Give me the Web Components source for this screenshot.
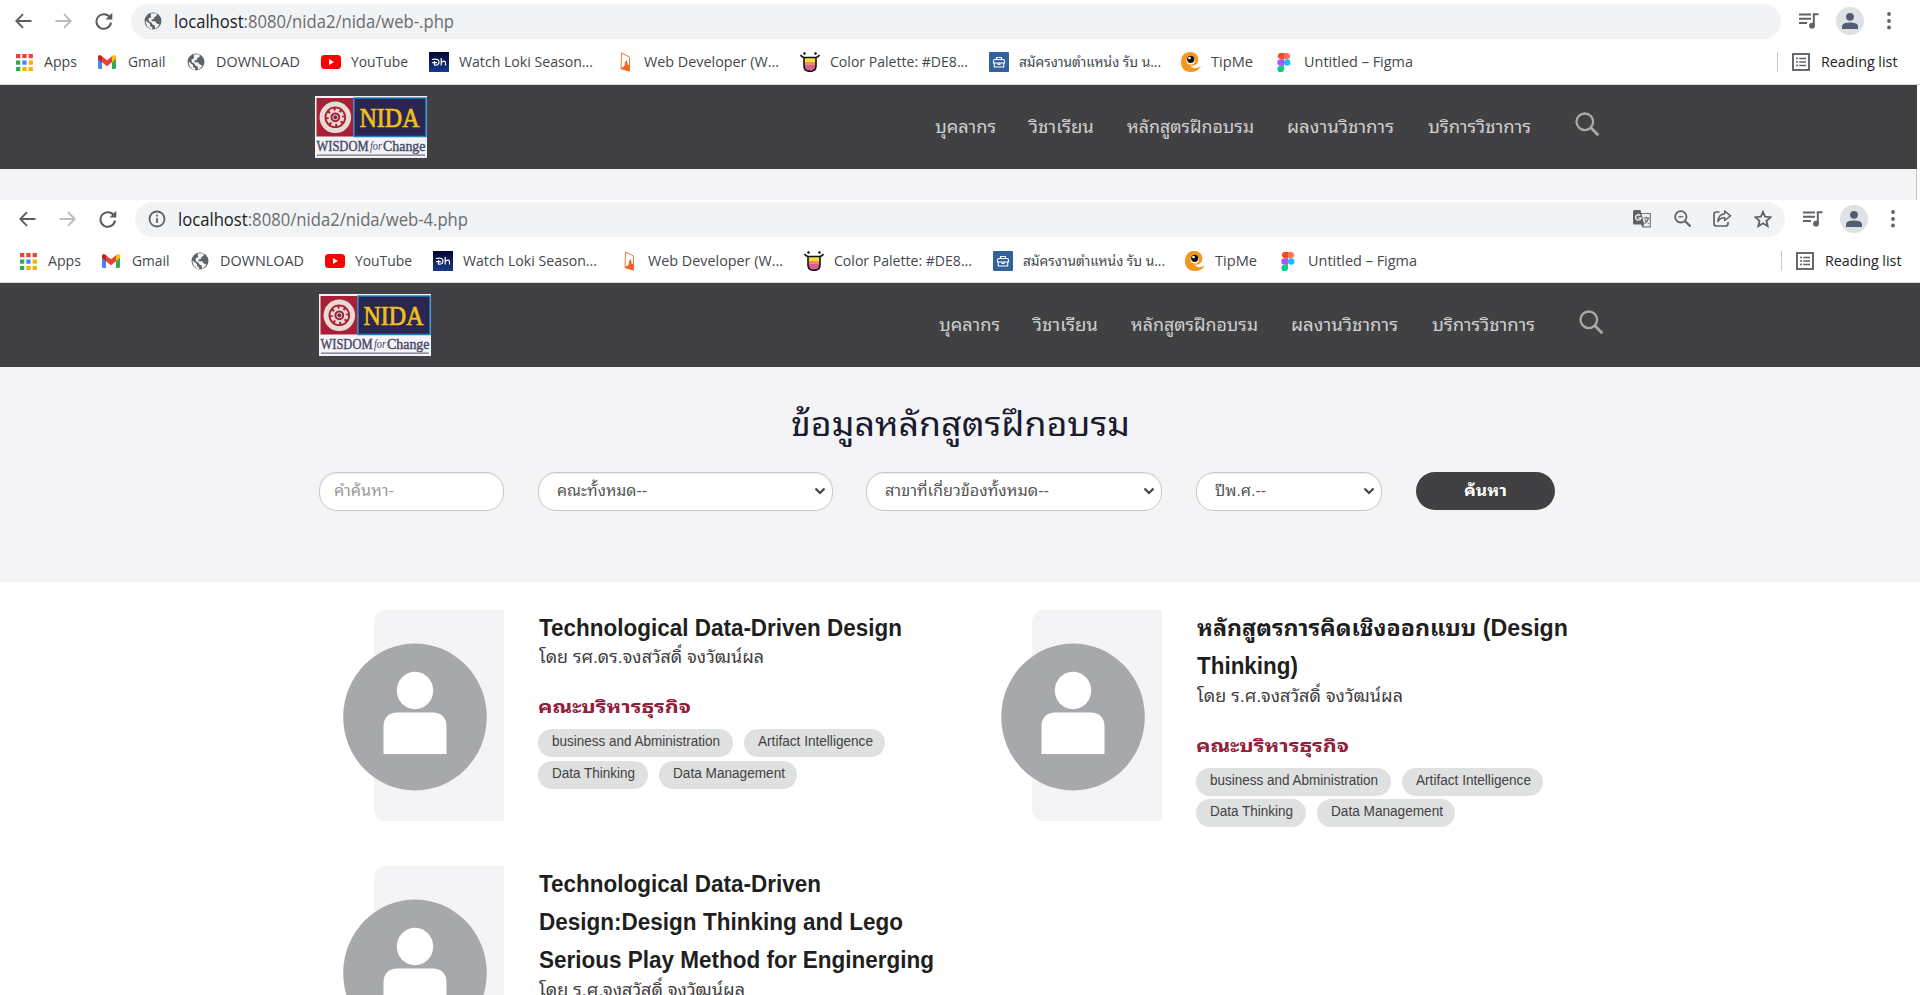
<!DOCTYPE html>
<html lang="th">
<head>
<meta charset="utf-8">
<title>NIDA</title>
<style>
html,body{margin:0;padding:0;background:#fff;overflow:hidden}
body{width:1920px;height:995px;font-family:"Liberation Sans","Noto Sans Thai Looped","Loma","Waree","Garuda","Noto Sans Thai","Noto Sans",sans-serif}
</style>
</head>
<body>
<nida-app></nida-app>
<script>
const define = (name, html, setup) => customElements.define(name, class extends HTMLElement {
  connectedCallback() {
    if (this.shadowRoot) return;
    const root = this.attachShadow({ mode: 'open' });
    root.innerHTML = typeof html === 'function' ? html(this) : html;
    if (setup) setup(this, root);
  }
});

const globe = '<svg viewBox="0 0 18 18" width="18" height="18"><circle cx="9" cy="9" r="8.5" fill="#5f6368"/><path d="M1.5 8.6 6 12v2l2.2 1.2v2A8.4 8.4 0 0 1 1.500 8.600ZM6.500 1.500 12.500 1.300 12.800 3.500 10.300 5.200 9.800 7 7.500 7.600 7.600 9.200 11 9.300 12.800 11.500 15.500 12.600A8 8 0 0 1 11 16.700L10.800 13.800 8.500 12.500 7.300 10.500 4.800 9.300 4.500 6.500 7.200 5.300Z" fill="#fff" opacity=".92"/></svg>';

const icons = {
  apps: '<svg width="17" height="17" viewBox="0 0 17 17">' +
    [['#ea4335','#ea4335','#ea4335'],['#34a853','#4285f4','#f2b200'],['#34a853','#f2b200','#f2b200']].map((r,y)=>r.map((c,x)=>`<rect x="${x*6.3}" y="${y*6.5}" width="4.300" height="4.200" fill="${c}"/>`).join('')).join('') + '</svg>',
  gmail: '<svg width="18" height="14" viewBox="0 0 18 14"><path d="M0 1.500V12.500Q0 14 1.500 14H4V4Z" fill="#4285f4"/><path d="M18 1.500V12.500Q18 14 16.500 14H14V4Z" fill="#34a853"/><path d="M14 1 16 0Q18 0 18 2V4L14 7.200Z" fill="#fbbc04"/><path d="M4 1.200 2 0Q0 0 0 2V4L4 7.200Z" fill="#c5221f"/><path d="M4 1.200 9 5.200 14 1.200V7.200L9 11.200 4 7.200Z" fill="#ea4335"/></svg>',
  globe,
  youtube: '<svg width="20" height="14" viewBox="0 0 20 14"><rect width="20" height="14" rx="3.500" fill="#f00"/><path d="M8 4 13 7 8 10Z" fill="#fff"/></svg>',
  loki: '<svg width="20" height="20" viewBox="0 0 20 20"><defs><linearGradient id="b" x2="0" y2="1"><stop stop-color="#03062c"/><stop offset="1" stop-color="#16398c"/></linearGradient></defs><rect width="20" height="20" fill="url(#b)"/><path d="M3 7.500Q10.500 6 10 10.500 9.500 13.500 5.500 13.200V9M3 10.800Q6 9.800 8 10.800M12.200 6V13.500M12.200 10.500Q16.500 7.500 16.500 11V13.500" fill="none" stroke="#fff" stroke-width="1.200"/></svg>',
  webdev: '<svg width="11" height="20" viewBox="0 0 11 20"><path d="M1.500 1 9.500 5V19L1 16.500Z" fill="none" stroke="#f0783c" stroke-width="1"/><path d="M1 16 4.500 14 5 10 7 8 7.500 12.500 9.500 13V19.500L1 17Z" fill="#f26522"/></svg>',
  palette: '<svg width="20" height="20" viewBox="0 0 20 20"><path d="M4 5.500H16V14Q16 19.300 10 19.300T4 14Z" fill="#f6df3c"/><path d="M4.500 10H15.500V14H4.500Z" fill="#ef8f5c"/><path d="M4.500 13H15.500Q16 19 10 19T4.500 13Z" fill="#d85c9c"/><path d="M.5 3Q2 5 4 5.500H16Q18 5 19.500 3M4 5.500V14Q4 19.300 10 19.300T16 14V5.500" fill="none" stroke="#111" stroke-width="1.600"/><circle cx="4.500" cy="1.500" r="1.200"/><circle cx="15.500" cy="1.500" r="1.200"/></svg>',
  job: '<svg width="20" height="20" viewBox="0 0 20 20"><rect width="20" height="20" rx="1" fill="#31629c"/><g fill="none" stroke="#fff" stroke-width="1.100"><path d="M7.500 7.500V5.500H12.500V7.500M4.500 11V9Q4.500 7.500 6 7.500H14Q15.500 7.500 15.500 9V11ZM5.300 11V15H14.700V11M9 11V12.500H11V11"/></g></svg>',
  tipme: '<svg width="20" height="20" viewBox="0 0 20 20"><path d="M9 0C14 0 17.300 3 17.300 7.500 17.300 12 14 14 9.500 13.800 11.500 17 16 17 20 14 18 18.500 14 20 9.500 20 3.500 20 0 16 0 10 0 4 3.500 0 9 0Z" fill="#f5961e"/><ellipse cx="9.700" cy="8.500" rx="4.200" ry="4" fill="#fff"/><ellipse cx="9.700" cy="7.300" rx="3.600" ry="3.600" fill="#111"/><circle cx="8.500" cy="6" r="1.300" fill="#fff"/></svg>',
  figma: '<svg width="14" height="19" viewBox="0 0 14 19"><path d="M7 0H3.500A3.200 3.200 0 0 0 3.500 6.300H7Z" fill="#f24e1e"/><path d="M7 0H10.500A3.200 3.200 0 0 1 10.500 6.300H7Z" fill="#ff7262"/><path d="M7 6.300H3.500A3.200 3.200 0 0 0 3.500 12.700H7Z" fill="#a259ff"/><circle cx="10.200" cy="9.500" r="3.200" fill="#1abcfe"/><path d="M3.500 12.700H7V15.800A3.300 3.300 0 1 1 3.500 12.700Z" fill="#0acf83"/></svg>',
  back: '<svg width="17" height="16" viewBox="0 0 17 16"><path d="M16.500 8H1.500M8 1.200 1.300 8 8 14.800" fill="none" stroke="#5a5d61" stroke-width="1.900"/></svg>',
  forward: '<svg width="17" height="16" viewBox="0 0 17 16"><path d="M.5 8H15.500M9 1.200 15.700 8 9 14.800" fill="none" stroke="#babcbe" stroke-width="1.900"/></svg>',
  reload: '<svg width="18" height="18" viewBox="0 0 18 18"><path d="M15.200 6A7.300 7.300 0 1 0 16 10.500" fill="none" stroke="#5a5d61" stroke-width="2"/><path d="M17.300.8V7.500H10.500Z" fill="#5a5d61"/></svg>',
  info: '<svg width="18" height="18" viewBox="0 0 18 18"><circle cx="9" cy="9" r="7.500" fill="none" stroke="#5f6368" stroke-width="1.800"/><path d="M8.100 8H9.900V13H8.100ZM8.100 4.800H9.900V6.500H8.100Z" fill="#5f6368"/></svg>',
  translate: '<svg width="19" height="18" viewBox="0 0 19 18"><path d="M7 3.500H17.300V16.800H9.500" fill="#f1f3f4" stroke="#777a7e" stroke-width="1.200"/><path d="M1.500 0H7.500L11.300 14.500H1.500Q0 14.500 0 13V1.500Q0 0 1.500 0ZM8 14.500 9.500 17.500 11 14.500Z" fill="#5f6368"/><path d="M7.300 5.600A2.700 2.700 0 1 0 8 7.800H5.300" fill="none" stroke="#f1f3f4" stroke-width="1.300"/><path d="M10.500 8H16.500M13.300 6.500V8M15.500 8Q14.500 12 11.500 13.500M12 9.500Q13.500 12.500 15.800 13.800" fill="none" stroke="#5f6368" stroke-width="1.100"/></svg>',
  zoomout: '<svg width="18" height="18" viewBox="0 0 18 18"><circle cx="6.800" cy="6.800" r="5.700" fill="none" stroke="#5f6368" stroke-width="1.800"/><path d="M4.300 6.800H9.300" stroke="#5f6368" stroke-width="1.300"/><path d="M11 11 16.500 16.500" stroke="#5f6368" stroke-width="2.200"/></svg>',
  share: '<svg width="19" height="18" viewBox="0 0 19 18"><path d="M6.500 2H3.500Q1 2 1 4.500V13.500Q1 16 3.500 16H12.500Q15 16 15 13.500V12" fill="none" stroke="#5f6368" stroke-width="1.700"/><path d="M11.700 1 17.500 5.800 11.700 10.500V7.800Q7.500 7.500 4.800 11.500 5.500 4.500 11.700 3.800Z" fill="none" stroke="#5f6368" stroke-width="1.500" stroke-linejoin="round"/></svg>',
  star: '<svg width="18" height="18" viewBox="0 0 18 18"><path d="M9 1.800 11.100 6.700 16.600 7.200 12.500 10.800 13.700 16.200 9 13.300 4.300 16.200 5.500 10.800 1.400 7.200 6.900 6.700Z" fill="none" stroke="#5f6368" stroke-width="1.800"/></svg>',
  music: '<svg width="20" height="16" viewBox="0 0 20 16"><path d="M0 1.500H12M0 5.700H12M0 10H8" stroke="#5f6368" stroke-width="1.900"/><path d="M14.800 13V1.200H19.500" fill="none" stroke="#5f6368" stroke-width="2"/><circle cx="13" cy="12.700" r="2.900" fill="#5f6368"/></svg>',
  user: '<svg width="28" height="28" viewBox="0 0 28 28"><circle cx="14" cy="14" r="14" fill="#dee1e6"/><circle cx="14" cy="9.800" r="3.900" fill="#535b70"/><path d="M6 22V19.500Q6 15.500 14 15.500T22 19.500V22Z" fill="#535b70"/></svg>',
  dots: '<svg width="4" height="18" viewBox="0 0 4 18"><g fill="#5f6368"><circle cx="2" cy="2" r="1.900"/><circle cx="2" cy="9" r="1.900"/><circle cx="2" cy="15.500" r="1.900"/></g></svg>',
  list: '<svg width="18" height="18" viewBox="0 0 18 18"><rect x="1" y="1" width="16" height="16" fill="none" stroke="#5f6368" stroke-width="1.900"/><path d="M4 5.500H6M4 9H6M4 12.500H6M7.300 5.500H14M7.300 9H14M7.300 12.500H14" stroke="#5f6368" stroke-width="1.500"/></svg>',
  search: '<svg width="25" height="25" viewBox="0 0 25 25"><circle cx="9.800" cy="9.800" r="8.300" fill="none" stroke="#a9a9aa" stroke-width="2.300"/><path d="M15.800 15.800 23.300 23.300" stroke="#a9a9aa" stroke-width="2.800"/></svg>'
};

define('ui-icon', el => `<style>:host{display:block;flex:none}svg{display:block}</style>${icons[el.getAttribute('name')]}`);

define('bookmark-item', el => `
<style>
:host{display:grid;grid-template-columns:${el.getAttribute('off')}px 1fr;width:${el.getAttribute('pitch')}px;align-items:center;flex:none}
</style>
<ui-icon name="${el.getAttribute('icon')}"></ui-icon><fit-text w="${el.getAttribute('w')}">${el.getAttribute('label')}</fit-text>`);

const bookmarks = [
  ['apps','Apps',82,28,33],['gmail','Gmail',89,30,37.500],['globe','DOWNLOAD',134,29,84],
  ['youtube','YouTube',108,30,57],['loki','Watch Loki Season...',191,30,134],['webdev','Web Developer (W...',180,24,135],
  ['palette','Color Palette: #DE8...',189,30,138],['job','สมัครงานตำแหน่ง รับ น...',192,30,142],
  ['tipme','TipMe',96,30,42],['figma','Untitled – Figma',140,27,109]];

define('browser-bar', el => `
<style>
:host{display:block;background:#fff;height:83px;border-bottom:1px solid #d8d9db;font-family:"Open Sans","Noto Sans Thai Looped","Loma","Waree","Garuda","Noto Sans Thai","Noto Sans",sans-serif;color:#44474b;box-sizing:content-box}
.tools{display:flex;align-items:center;height:35px;padding:var(--top,3px) 0 calc(3px - var(--top,3px)) var(--dx,0px);box-sizing:content-box}
.tools>ui-icon{margin-bottom:2px}
.tools>.b{margin-left:14.500px}.tools>.f{margin-left:23px}.tools>.r{margin-left:23px}
.omni{margin-left:18px;width:1650px;height:35px;border-radius:18px;background:#f1f3f4;display:flex;align-items:center;box-sizing:border-box;padding:0 0 2px 13px;color:#6a6d71;font-size:18px;line-height:30px}
.omni fit-text{margin-left:12px}
.omni b{font-weight:400;color:#202124}
.acts{margin-left:auto;display:flex;gap:21.500px;padding-right:13px}
.music{margin-left:18px}.user{margin-left:17px}.dots{margin-left:23px}
.marks{display:flex;align-items:center;height:44px;padding:1px 0 0 calc(15.500px + var(--dx,0px));font-size:14.500px;line-height:22px}
.sep{margin-left:360px;width:1px;height:20px;background:#c6c8ca;flex:none}
.list{margin:0 11px 0 14px}
.rl{color:#202124}
</style>
<div class="tools">
<ui-icon class="b" name="back"></ui-icon><ui-icon class="f" name="forward"></ui-icon><ui-icon class="r" name="reload"></ui-icon>
<div class="omni"><ui-icon name="${el.getAttribute('icon')}"></ui-icon><fit-text w="${el.getAttribute('w')}"><b>localhost</b>:8080/nida2/nida/${el.getAttribute('page')}</fit-text>
${el.hasAttribute('actions') ? '<div class="acts"><ui-icon name="translate"></ui-icon><ui-icon name="zoomout"></ui-icon><ui-icon name="share"></ui-icon><ui-icon name="star"></ui-icon></div>' : ''}</div>
<ui-icon class="music" name="music"></ui-icon><ui-icon class="user" name="user"></ui-icon><ui-icon class="dots" name="dots"></ui-icon>
</div>
<div class="marks">${bookmarks.map(([i,l,p,o,w]) => `<bookmark-item icon="${i}" label="${l}" pitch="${p}" off="${o}" w="${w}"></bookmark-item>`).join('')}
<div class="sep"></div><ui-icon class="list" name="list"></ui-icon><fit-text class="rl" w="76.500">Reading list</fit-text></div>`);

define('nida-logo', `
<style>:host{display:block;flex:none}svg{display:block}</style>
<svg width="112" height="62" viewBox="0 0 112 62">
<rect width="112" height="62" fill="#f4f4f6"/>
<rect x="1.500" y="2" width="37" height="38.500" fill="#a92036"/>
<rect x="39" y="2" width="72" height="38.500" fill="#2a2650" stroke="#2181c4" stroke-width="1.500"/>
<circle cx="20.300" cy="21.300" r="13.300" fill="none" stroke="#eadbd2" stroke-width="5"/>
<circle cx="20.300" cy="21.300" r="7.600" fill="none" stroke="#eadbd2" stroke-width="2.600" stroke-dasharray="4 1.970"/>
<circle cx="20.300" cy="21.300" r="5.800" fill="none" stroke="#eadbd2" stroke-width="1.800"/>
<circle cx="20.300" cy="21.300" r="2.500" fill="#6b2e4c" stroke="#eadbd2" stroke-width="1"/>
<text x="44.500" y="30.500" font-family="Liberation Serif,serif" font-size="27" fill="#f2c11c" stroke="#f2c11c" stroke-width=".7" textLength="60" lengthAdjust="spacingAndGlyphs">NIDA</text>
<g font-family="Liberation Serif,serif" fill="#47476a" stroke="#47476a" stroke-width=".4"><text x="1.500" y="54.500" font-size="14" textLength="52" lengthAdjust="spacingAndGlyphs">WISDOM</text><text x="55" y="53.500" font-size="12" font-style="italic" stroke="none" textLength="12" lengthAdjust="spacingAndGlyphs">for</text><text x="68" y="54.500" font-size="14.500" textLength="42.500" lengthAdjust="spacingAndGlyphs">Change</text></g>
<rect x="2" y="58.500" width="108" height="1.300" fill="#77778f"/>
</svg>`);

define('nida-nav', `
<style>
:host{display:flex;height:84px;background:#414042;padding-left:calc(315px + var(--dx,0px));box-sizing:border-box;color:#d0d0d1;font-size:17px;line-height:24px}
nida-logo{margin-top:11px}
nav{display:flex;margin:31px 0 0 508px}
ui-icon{margin:27px 0 0 44.500px}
</style>
<nida-logo></nida-logo>
<nav><fit-text w="61">บุคลากร</fit-text><fit-text w="65" style="margin-left:32.500px">วิชาเรียน</fit-text><fit-text w="127" style="margin-left:33px">หลักสูตรฝึกอบรม</fit-text><fit-text w="107" style="margin-left:33.500px">ผลงานวิชาการ</fit-text><fit-text w="103" style="margin-left:33.500px">บริการวิชาการ</fit-text></nav>
<ui-icon name="search"></ui-icon>`);

define('form-field', el => `
<style>
:host{display:flex;align-items:center;justify-content:space-between;box-sizing:border-box;height:39px;border:1px solid #c9c9cb;border-radius:18px;background:#fff;box-shadow:inset 0 1px 1px rgba(0,0,0,.08);padding:0 6px 1px 18px;color:#555;font-size:15px;line-height:24px}
:host([plain]){padding-left:14px;color:#999}
svg{display:block}
</style>
<slot></slot>${el.hasAttribute('plain') ? '' : '<svg width="12" height="8" viewBox="0 0 12 8"><path d="M1.500 1.500 6 6 10.500 1.500" fill="none" stroke="#444" stroke-width="2.200"/></svg>'}`);

define('search-panel', `
<style>
:host{display:block;height:215px;box-sizing:border-box;padding:33px 0 0 319px;background:#f4f4f7}
h1{margin:0 0 24px 471.500px;font-weight:400;font-size:34px;line-height:48px;color:#1a1b2e}
form{display:grid;grid-template-columns:185px 295px 296px 186px 139px;column-gap:33.700px;align-items:start}
button{all:unset;box-sizing:border-box;height:38px;border-radius:19px;background:#414042;color:#fff;font-weight:700;font-size:16px;line-height:24px;display:flex;align-items:center;justify-content:center}
</style>
<h1><fit-text w="339">ข้อมูลหลักสูตรฝึกอบรม</fit-text></h1>
<form><form-field plain><fit-text w="60">คำค้นหา-</fit-text></form-field>
<form-field><fit-text w="90">คณะทั้งหมด--</fit-text></form-field>
<form-field><fit-text w="164">สาขาที่เกี่ยวข้องทั้งหมด--</fit-text></form-field>
<form-field><fit-text w="51">ปีพ.ศ.--</fit-text></form-field>
<button type="button"><fit-text w="43">ค้นหา</fit-text></button></form>`);

define('user-portrait', `
<style>
:host{display:block;position:relative;width:130px;height:211px;border-radius:12px 0 0 12px;background:#f4f4f7}
svg{position:absolute;left:-31.500px;top:33px}
</style>
<svg width="144" height="148" viewBox="0 0 144 148"><ellipse cx="72" cy="74" rx="71.800" ry="73.500" fill="#a7a8ab"/><ellipse cx="72" cy="47.500" rx="18.200" ry="18.700" fill="#fff"/><path d="M40.500 111V84Q40.500 69.500 55 69.500H89Q103.500 69.500 103.500 84V111Z" fill="#fff"/></svg>`);

define('tag-chip', el => `
<style>:host{display:block;box-sizing:border-box;height:28px;border-radius:14px;background:#dfe1e0;color:#414042;font-size:14px;line-height:24px;padding:0 0 4px 13.500px;width:${el.getAttribute('box')}px}</style>
<slot></slot>`);

define('course-card', `
<style>
:host{display:grid;grid-template-columns:130px 1fr;column-gap:34px;padding-left:55px;box-sizing:border-box;height:255.500px;align-items:start}
.body{margin-top:-1px}
.title{font-weight:700;font-size:23px;line-height:38.400px;color:#1f1f1f;margin-left:.7px}
.by{font-size:17px;line-height:22px;height:20px;color:#414042;margin-left:.5px}
.fac{margin-top:28px;font-weight:700;font-size:18px;line-height:24px;height:24px;color:#93203a}
.tags{margin-top:10px;display:grid;row-gap:3.500px}
.row{display:flex;gap:11px}
</style>
<user-portrait></user-portrait>
<div class="body"><div class="title"><slot name="title"></slot></div><div class="by"><slot name="by"></slot></div>
<div class="fac"><fit-text w="153">คณะบริหารธุรกิจ</fit-text></div>
<div class="tags"><div class="row"><tag-chip box="195"><fit-text w="168">business and Abministration</fit-text></tag-chip><tag-chip box="141"><fit-text w="115">Artifact Intelligence</fit-text></tag-chip></div>
<div class="row"><tag-chip box="110"><fit-text w="83">Data Thinking</fit-text></tag-chip><tag-chip box="138"><fit-text w="112">Data Management</fit-text></tag-chip></div></div></div>`);

define('nida-app', `
<style>
:host{display:block;width:1920px;height:995px;overflow:hidden;background:#fff}
.first{height:200px;overflow:hidden;display:flex;flex-direction:column}
.first nida-nav{width:1917px}
.first browser-bar{padding-top:1px}
.strip{flex:1;width:1916px;background:#f4f4f7;border-right:1px solid #c4c4c6}
.second{--dx:4px;--top:2px}
.second browser-bar{height:82px}
.cards{display:grid;grid-template-columns:658px 658px;padding:28px 0 0 319px;height:385px;overflow:hidden}
</style>
<section class="first"><browser-bar icon="globe" w="280" page="web-.php"></browser-bar><nida-nav></nida-nav><div class="strip"></div></section>
<section class="second"><browser-bar icon="info" w="290" page="web-4.php" actions></browser-bar><nida-nav></nida-nav><search-panel></search-panel>
<div class="cards">
<course-card><fit-text slot="title" w="363">Technological Data-Driven Design</fit-text><fit-text slot="by" w="225">โดย รศ.ดร.จงสวัสดิ์ จงวัฒน์ผล</fit-text></course-card>
<course-card><fit-text slot="title" w="371">หลักสูตรการคิดเชิงออกแบบ (Design</fit-text><fit-text slot="title" w="101">Thinking)</fit-text><fit-text slot="by" w="206">โดย ร.ศ.จงสวัสดิ์ จงวัฒน์ผล</fit-text></course-card>
<course-card><fit-text slot="title" w="282">Technological Data-Driven</fit-text><fit-text slot="title" w="364">Design:Design Thinking and Lego</fit-text><fit-text slot="title" w="395">Serious Play Method for Enginerging</fit-text><fit-text slot="by" w="206">โดย ร.ศ.จงสวัสดิ์ จงวัฒน์ผล</fit-text></course-card>
</div></section>`);

/* Sets a run of text to an exact width by condensing or widening its glyphs. */
define('fit-text', '<style>:host{display:block;white-space:nowrap;flex:none}span{display:inline-block;transform-origin:0 50%;vertical-align:top}</style><span><slot></slot></span>', (el, root) => {
  const span = root.querySelector('span'), w = parseFloat(el.getAttribute('w'));
  const natural = span.getBoundingClientRect().width;
  if (natural) span.style.transform = `scaleX(${w / natural})`;
  el.style.width = w + 'px';
  span.style.marginRight = (w - natural) + 'px';
});
</script>
</body>
</html>
